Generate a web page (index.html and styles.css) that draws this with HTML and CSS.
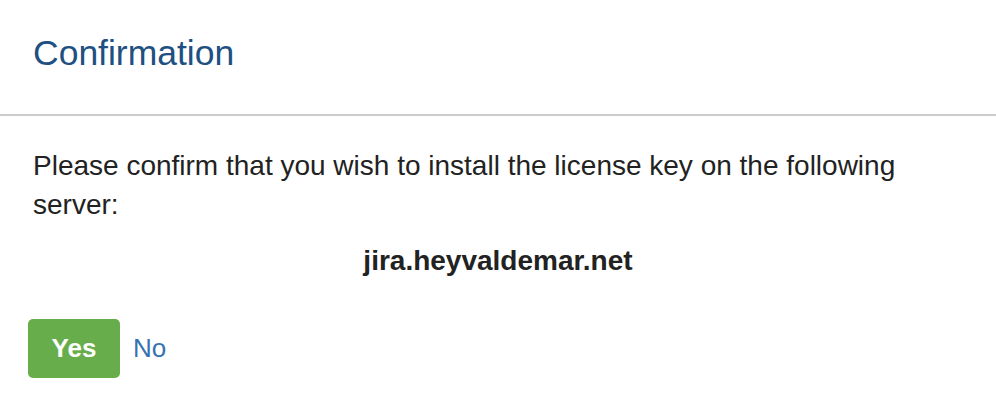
FILE: index.html
```html
<!DOCTYPE html>
<html>
<head>
<meta charset="utf-8">
<link rel="stylesheet" href="styles.css">
</head>
<body>
<div class="dialog">
  <div class="dialog-header">
    <h2 class="dialog-title">Confirmation</h2>
  </div>
  <div class="dialog-content">
    <p class="message">Please confirm that you wish to install the license key on the following server:</p>
    <p class="host">jira.heyvaldemar.net</p>
    <div class="actions">
      <button class="btn-yes" type="button">Yes</button>
      <a class="link-no" href="#">No</a>
    </div>
  </div>
</div>
</body>
</html>
```

FILE: styles.css
```css
html, body {
  margin: 0;
  padding: 0;
  background: #fff;
}
body {
  font-family: "Liberation Sans", Arial, Helvetica, sans-serif;
  color: #222;
}
.dialog {
  width: 996px;
}
.dialog-header {
  height: 116px;
  box-sizing: border-box;
  padding: 35px 33px 0;
  border-bottom: 2px solid #cccccc;
}
.dialog-title {
  margin: 0;
  font-size: 35.5px;
  line-height: 36px;
  font-weight: normal;
  color: #205081;
}
.dialog-content {
  padding: 30px 33px 0;
}
.message {
  margin: 0;
  font-size: 28px;
  line-height: 39px;
  width: 900px;
}
.host {
  margin: 17px 0 0;
  text-align: center;
  font-weight: bold;
  font-size: 28px;
  line-height: 40px;
}
.actions {
  display: flex;
  align-items: center;
  gap: 13px;
  margin-top: 38px;
  margin-left: -5px;
}
.btn-yes {
  width: 92px;
  height: 59px;
  border: none;
  border-radius: 5px;
  background: #68ad4b;
  color: #fff;
  font-family: "Liberation Sans", Arial, Helvetica, sans-serif;
  font-weight: bold;
  font-size: 26px;
  padding: 0;
}
.link-no {
  color: #3572b0;
  text-decoration: none;
  font-size: 26px;
}
```
